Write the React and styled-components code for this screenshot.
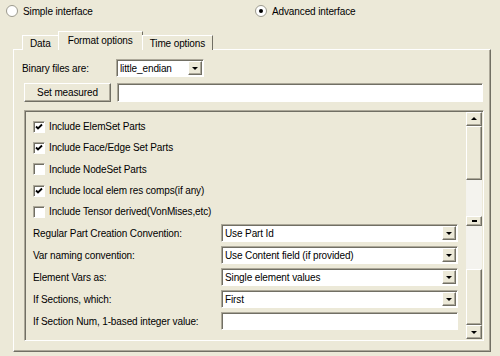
import React from "react";
import styled, { createGlobalStyle, css } from "styled-components";

const GlobalStyle = createGlobalStyle`
  html, body {
    margin: 0;
    padding: 0;
    background: #ece9d8;
  }
  body {
    font-family: "Liberation Sans", Arial, sans-serif;
    font-size: 10px;
    letter-spacing: -0.12px;
    color: #000;
  }
`;

const raised = css`
  border-top: 1px solid #fff;
  border-left: 1px solid #fff;
  border-right: 1px solid #716f64;
  border-bottom: 1px solid #716f64;
  box-shadow: inset -1px -1px 0 #aca899;
`;

const sunken = css`
  border-top: 1px solid #aca899;
  border-left: 1px solid #aca899;
  border-right: 1px solid #fff;
  border-bottom: 1px solid #fff;
  box-shadow: inset 1px 1px 0 #716f64;
`;

const Window = styled.div`
  width: 500px;
  height: 356px;
  background: #ece9d8;
  overflow: hidden;
  display: flex;
  flex-direction: column;
`;

const RadioRow = styled.div`
  display: grid;
  grid-template-columns: 249px auto;
  height: 22px;
  padding-left: 6px;
  align-items: center;
`;

const RadioItem = styled.label`
  display: flex;
  align-items: center;
  gap: 5px;
`;

const RadioDot = styled.span`
  width: 12px;
  height: 12px;
  border-radius: 50%;
  background: #fff;
  border: 1px solid #9c9a8e;
  box-sizing: border-box;
  display: flex;
  align-items: center;
  justify-content: center;

  &::after {
    content: "";
    width: 4px;
    height: 4px;
    border-radius: 50%;
    background: ${({ $checked }) => ($checked ? "#000" : "transparent")};
  }
`;

const TabStrip = styled.div`
  display: flex;
  align-items: flex-end;
  height: 19px;
  margin-top: 9px;
  padding-left: 22px;
  position: relative;
  z-index: 1;
  margin-bottom: -1px;
`;

const Tab = styled.div`
  box-sizing: border-box;
  height: ${({ $active }) => ($active ? "19px" : "15px")};
  padding: 0 ${({ $active }) => ($active ? "9px" : "7px")};
  display: flex;
  align-items: center;
  border-top: 1px solid #fff;
  border-left: 1px solid #fff;
  border-right: 1px solid #716f64;
  background: #ece9d8;
  ${({ $active }) =>
    $active &&
    css`
      margin: 0 -1px;
      padding-bottom: 1px;
    `}
`;

const Panel = styled.div`
  box-sizing: border-box;
  margin: 0 9px 0 13px;
  height: 303px;
  border-top: 1px solid #fff;
  border-left: 1px solid #fff;
  border-right: 1px solid #716f64;
  border-bottom: 1px solid #716f64;
  box-shadow: inset -1px -1px 0 #aca899;
  padding-top: 9px;
  display: flex;
  flex-direction: column;
`;

const BinaryRow = styled.div`
  display: grid;
  grid-template-columns: 94px 88px;
  align-items: center;
  padding-left: 8px;
  height: 18px;
`;

const Select = styled.div`
  box-sizing: border-box;
  height: 18px;
  width: ${({ $width }) => $width}px;
  background: #fff;
  ${sunken};
  display: flex;
  align-items: center;
  justify-content: space-between;
  padding: 0 1px 0 3px;
`;

const DropButton = styled.span`
  box-sizing: border-box;
  width: 14px;
  height: 14px;
  background: #ece9d8;
  ${raised};
  display: flex;
  align-items: center;
  justify-content: center;

  &::after {
    content: "";
    border-left: 3px solid transparent;
    border-right: 3px solid transparent;
    border-top: 3px solid #000;
  }
`;

const ButtonRow = styled.div`
  display: flex;
  gap: 6px;
  margin-top: 6px;
  padding-left: 10px;
  height: 19px;
`;

const Button = styled.div`
  box-sizing: border-box;
  width: 87px;
  background: #ece9d8;
  ${raised};
  display: flex;
  align-items: center;
  justify-content: center;
`;

const TextInput = styled.div`
  box-sizing: border-box;
  width: 366px;
  background: #fff;
  ${sunken};
`;

const ScrollBox = styled.div`
  box-sizing: border-box;
  margin: 8px 0 0 10px;
  width: 460px;
  height: 231px;
  ${sunken};
  display: flex;
`;

const ScrollContent = styled.div`
  flex: 1;
  padding: 5px 0 0 8px;
  display: flex;
  flex-direction: column;
`;

const CheckRow = styled.div`
  display: flex;
  align-items: center;
  gap: 4px;
  height: 21.3px;
`;

const CheckBox = styled.span`
  box-sizing: border-box;
  width: 12px;
  height: 12px;
  background: #fff;
  ${sunken};
  display: flex;
  align-items: center;
  justify-content: center;
`;

const SettingRow = styled.div`
  display: grid;
  grid-template-columns: 188px 237px;
  align-items: center;
  height: 22px;
`;

const ScrollBar = styled.div`
  width: 16px;
  margin: 1px 1px 1px 0;
  display: flex;
  flex-direction: column;
  background: #f4f3ee;
`;

const ScrollButton = styled.div`
  box-sizing: border-box;
  height: ${({ $h }) => $h}px;
  background: #ece9d8;
  ${raised};
  display: flex;
  align-items: center;
  justify-content: center;
`;

const Track = styled.div`
  height: ${({ $h }) => $h}px;
`;

const Arrow = styled.span`
  border-left: 3px solid transparent;
  border-right: 3px solid transparent;
  ${({ $up }) =>
    $up
      ? css`border-bottom: 3px solid #000;`
      : css`border-top: 3px solid #000;`}
`;

const Dash = styled.span`
  width: 5px;
  height: 2px;
  background: #000;
`;

const Check = () => (
  <svg width="8" height="8" viewBox="0 0 8 8">
    <path d="M1 3.5 L3 5.5 L7 1.5" stroke="#000" strokeWidth="1.8" fill="none" />
  </svg>
);

const checks = [
  ["Include ElemSet Parts", true],
  ["Include Face/Edge Set Parts", true],
  ["Include NodeSet Parts", false],
  ["Include local elem res comps(if any)", true],
  ["Include Tensor derived(VonMises,etc)", false],
];

const settings = [
  ["Regular Part Creation Convention:", "Use Part Id", true],
  ["Var naming convention:", "Use Content field (if provided)", true],
  ["Element Vars as:", "Single element values", true],
  ["If Sections, which:", "First", true],
  ["If Section Num, 1-based integer value:", "", false],
];

export default function App() {
  return (
    <>
      <GlobalStyle />
      <Window>
        <RadioRow>
          <RadioItem>
            <RadioDot />
            Simple interface
          </RadioItem>
          <RadioItem>
            <RadioDot $checked />
            Advanced interface
          </RadioItem>
        </RadioRow>
        <TabStrip>
          <Tab>Data</Tab>
          <Tab $active>Format options</Tab>
          <Tab>Time options</Tab>
        </TabStrip>
        <Panel>
          <BinaryRow>
            <span>Binary files are:</span>
            <Select $width={88}>
              little_endian
              <DropButton />
            </Select>
          </BinaryRow>
          <ButtonRow>
            <Button>Set measured</Button>
            <TextInput />
          </ButtonRow>
          <ScrollBox>
            <ScrollContent>
              {checks.map(([label, on]) => (
                <CheckRow key={label}>
                  <CheckBox>{on && <Check />}</CheckBox>
                  {label}
                </CheckRow>
              ))}
              {settings.map(([label, value, drop]) => (
                <SettingRow key={label}>
                  <span>{label}</span>
                  <Select $width={237}>
                    {value}
                    {drop && <DropButton />}
                  </Select>
                </SettingRow>
              ))}
            </ScrollContent>
            <ScrollBar>
              <ScrollButton $h={14}>
                <Arrow $up />
              </ScrollButton>
              <ScrollButton $h={55} />
              <Track $h={36} />
              <ScrollButton $h={10}>
                <Dash />
              </ScrollButton>
              <Track $h={43} />
              <ScrollButton $h={57} />
              <ScrollButton $h={14}>
                <Arrow />
              </ScrollButton>
            </ScrollBar>
          </ScrollBox>
        </Panel>
      </Window>
    </>
  );
}
